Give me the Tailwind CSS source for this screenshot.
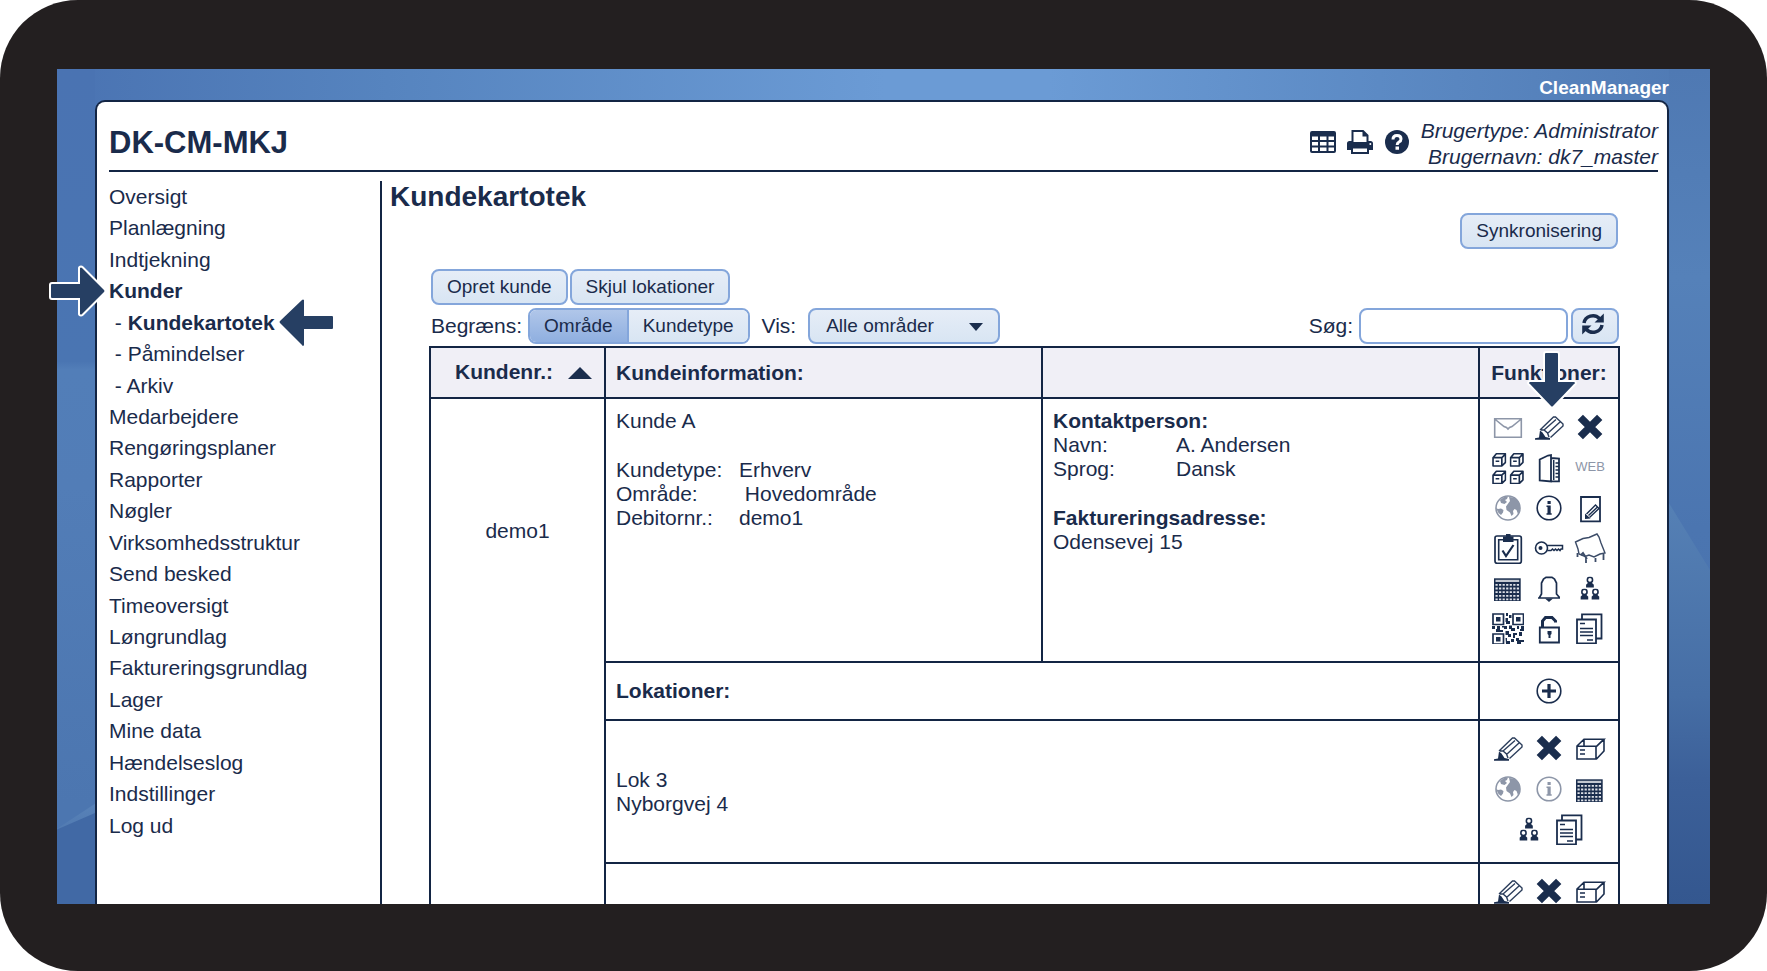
<!DOCTYPE html>
<html lang="da">
<head>
<meta charset="utf-8">
<title>Kundekartotek</title>
<script src="https://cdn.jsdelivr.net/npm/@tailwindcss/browser@4"></script>
</head>
<body class="bg-white">
<svg class="hidden" aria-hidden="true">
  <defs>
    <symbol id="mail" viewBox="0 0 32 32"><path d="M2.7 6.7H29.3V25.3H2.7ZM2.7 7L12 14.5L14.5 15.5L16 17L17.5 15.5L20 14.500L29.300 7" fill="none" stroke="#8d96a8" stroke-width="1.6"/></symbol>
    <symbol id="pencil" viewBox="0 0 32 32"><path d="M7 18L20.500 5H22.500L30 12V14L17.500 25.500M8 18H11L14.500 21L16 25M11 18L23 7.500M14.500 21.500L27 10" fill="none" stroke="#2c3e5c" stroke-width="1.400"/><path d="M2 27.700V26.200L6 25.500L7 18.500L9.500 20.500L12.500 25L17 26V27.700Z" fill="#1a2d4d"/></symbol>
    <symbol id="cross" viewBox="0 0 32 32"><path d="M6.300 5.300L25.700 24.700M25.700 5.300L6.300 24.700" stroke="#1a2d4d" stroke-width="7.500"/></symbol>
    <symbol id="cube" viewBox="0 0 14 14"><path d="M1 5H9.500V13H1ZM1 5L4.200 1.200H13V9.500L9.500 13M9.500 5L13 1.500" fill="none" stroke="#1a2d4d" stroke-width="1.600" stroke-linejoin="round"/><path d="M3.500 8.500H7" stroke="#1a2d4d" stroke-width="1.500"/></symbol>
    <symbol id="cubes" viewBox="0 0 32 32"><use href="#cube" x="0" y="0.500" width="14.500" height="14.500"/><use href="#cube" x="17.500" y="0.500" width="14.500" height="14.500"/><use href="#cube" x="0" y="18" width="14.500" height="14.500"/><use href="#cube" x="17.500" y="18" width="14.500" height="14.500"/></symbol>
    <symbol id="door" viewBox="0 0 32 32"><path d="M6.700 7.500L15 3.500L18 3V29.500L6.700 28.500ZM18 6L26 6.500V29.300H18" fill="none" stroke="#1a2d4d" stroke-width="1.800"/><path d="M22.500 11H26M22.500 14.500H26M22.500 18H26M22.500 21.500H26M22.500 25H26M20.700 8V28" stroke="#1a2d4d" stroke-width="1.500"/></symbol>
    <symbol id="globe" viewBox="0 0 32 32"><circle cx="16" cy="16" r="12" fill="#fff" stroke="#8d96a8" stroke-width="1.600"/><path d="M4 16L6 17L9 16.500L11.500 18L11 20.500L9 23L6.500 21ZM8 8L12 5L16 4.500L15 7L13 8L15 10L12.500 12L9 11ZM17 5L22 5.500L26 9L28 14V19L26 22L24.500 18L22.500 17L21 19L21.500 22L19.500 24L18 20.500L14.500 18L14 14.500L16.500 11L18 9Z" fill="#8d96a8"/></symbol>
    <symbol id="info" viewBox="0 0 32 32"><circle cx="16" cy="16" r="11.800" fill="none" stroke="currentColor" stroke-width="1.600"/><path d="M14.500 9H17.700V12H14.500ZM13.500 13.500H17.700V21.200H18.700V22.700H13.500V21.200H14.500V15H13.500Z" fill="currentColor"/></symbol>
    <symbol id="editpage" viewBox="0 0 32 32"><path d="M7 5H26V29.300H7Z" fill="none" stroke="#1a2d4d" stroke-width="1.800"/><path d="M12.500 22L21.500 13L25 16.500L15.500 25.500M14.500 23.500L23.500 15" fill="none" stroke="#1a2d4d" stroke-width="1.400"/><path d="M11 27V21.500L16.500 26.500Z" fill="#1a2d4d"/></symbol>
    <symbol id="clipboard" viewBox="0 0 32 32"><rect x="3" y="4" width="26.300" height="27.300" rx="2" fill="none" stroke="#1a2d4d" stroke-width="1.700"/><path d="M6.700 7.700H25.700V27.700H6.700Z" fill="none" stroke="#1a2d4d" stroke-width="1.600"/><path d="M11 10V4.500H14V2H18.500V4.500H21.500V10Z" fill="#1a2d4d"/><path d="M10.500 18.500L14 24L21.500 13" fill="none" stroke="#1a2d4d" stroke-width="2.200"/></symbol>
    <symbol id="key" viewBox="0 0 32 32"><circle cx="8.500" cy="16" r="6" fill="none" stroke="#1a2d4d" stroke-width="1.600"/><circle cx="7.500" cy="16" r="2" fill="#1a2d4d"/><path d="M14 13.500H29.500V17H28L27 18.500L25.500 17L24 18.500L22.500 17L21 18.500L19.500 17L18 18.500H14.500" fill="none" stroke="#1a2d4d" stroke-width="1.500"/></symbol>
    <symbol id="board" viewBox="0 0 32 32"><path d="M1.500 10L9 6.500L15 5.500L23 2L25 5L27 11L31 21L26 22L20 25L15 23L11 24.500L5 22L4 17Z" fill="none" stroke="#3c4c68" stroke-width="1.400"/><path d="M3.500 21V25M12 26V31M21.500 26V30M29.500 22V28M7 23L9 21L11 24L13 27" fill="none" stroke="#3c4c68" stroke-width="1.800"/></symbol>
    <symbol id="calendar" viewBox="0 0 32 32"><path d="M2 6.300H28.700V29H2Z" fill="#1a2d4d"/><path d="M3.500 7.800H27.200V10H3.500Z" fill="#c3c8d1"/><path d="M3.500 12.800H27.500M3.500 16.500H27.500M3.500 20.200H27.500M3.500 23.900H27.500M3.500 27.300H27.500" stroke="#dfe2e8" stroke-width="1.800" stroke-dasharray="2.200 1.350"/></symbol>
    <symbol id="bell" viewBox="0 0 32 32"><path d="M5 26H27M6.500 25.500L8.500 22V11L10.500 7L13 5.300H19L21.500 7L23.500 11V22L26.500 25.500" fill="none" stroke="#1a2d4d" stroke-width="1.700"/><path d="M12 26.500H20L16 30Z" fill="#1a2d4d"/></symbol>
    <symbol id="person" viewBox="0 0 8 11"><circle cx="4" cy="3.300" r="2.500" fill="none" stroke="#1a2d4d" stroke-width="1.500"/><path d="M.3 10.500V8L2.200 6H5.800L7.700 8V10.500Z" fill="#1a2d4d"/></symbol>
    <symbol id="people" viewBox="0 0 32 32"><use href="#person" x="11.700" y="4.500" width="8.500" height="11.500"/><use href="#person" x="6.200" y="16.500" width="8.500" height="11.500"/><use href="#person" x="17.200" y="16.500" width="8.500" height="11.500"/></symbol>
    <symbol id="qr" viewBox="0 0 32 32"><path d="M1 2H11.500V12.500H1ZM21 2H31.500V12.500H21ZM1 22H11.500V32H1Z" fill="none" stroke="#1a2d4d" stroke-width="1.700"/><path d="M4 5H8.500V9.500H4ZM24 5H28.500V9.500H24ZM4 25H8.500V29.500H4ZM14 1H16V4H14ZM17 3H19.500V6H17ZM13.500 6H16V9H18V12H14V10H13.500ZM0 14H3V17H0ZM5 14H8V18H11V20H4V17H5ZM10 14H15V17H12V15.500H10ZM17 13.500H20V16H23V19H19V17H17ZM25 14H27V17H25ZM29 14H32V19H28V17H29ZM13.500 19H17V22H19V25H16V23H13.500ZM21 21H25V23H23V26H21ZM27 20H30V24H27ZM13.500 26H15V29H18V32H14ZM19 27H22V30H19ZM24 26H27V28H32V30H29V32H25V29H24Z" fill="#1a2d4d"/></symbol>
    <symbol id="lock" viewBox="0 0 32 32"><path d="M6.800 15.500H26V30.500H6.800Z" fill="none" stroke="#1a2d4d" stroke-width="1.800"/><path d="M9.500 15V9L12.500 5.500H19L22.500 9V10.500" fill="none" stroke="#1a2d4d" stroke-width="3"/><path d="M14.500 19H18.500V22L17.500 23V26H15.500V23L14.500 22Z" fill="#1a2d4d"/></symbol>
    <symbol id="docs" viewBox="0 0 32 32"><path d="M8 6.500V2.300H27.500V26.500H22M3 7.500H22V31.500H3Z" fill="none" stroke="#1a2d4d" stroke-width="1.800"/><path d="M6 11.500H11M6 16.500H19M6 20H19M6 23.500H19M13 28H19" stroke="#1a2d4d" stroke-width="1.600"/></symbol>
    <symbol id="plus" viewBox="0 0 32 32"><circle cx="16" cy="16" r="11.800" fill="none" stroke="#1a2d4d" stroke-width="1.600"/><path d="M16 9V23M9 16H23" stroke="#1a2d4d" stroke-width="3.200"/></symbol>
    <symbol id="box" viewBox="0 0 32 32"><path d="M3 13.300H22V26H3ZM3 13L10 6.200H30L22.500 13.300M30 6.200V18L22.500 26M10 6.200V12.500" fill="none" stroke="#1a2d4d" stroke-width="1.600"/><path d="M6 17H11M6 21H11" stroke="#1a2d4d" stroke-width="1.600"/></symbol>
  </defs>
</svg>

<div class="relative flex h-screen flex-col overflow-hidden rounded-[78px] bg-[#231f20] px-[57px] pt-[69px] pb-[67px] font-['Liberation_Sans',Arial,sans-serif] text-[21px] text-[#1a2b4b]">
  <div class="relative flex min-h-0 flex-1 flex-col overflow-hidden bg-[linear-gradient(to_right,#4a73b2,#5684bf_20%,#6b9bd5_50%,#6b9bd5_60%,#5c8ac4_80%,#4f79b3)] pr-[41px] pl-[38px]">
    <!-- Side bands of the wallpaper with their diagonal ridges -->
    <div class="absolute inset-y-0 left-0 w-[38px] bg-[linear-gradient(to_bottom,#4a73b2,#4a75b2_35%,#527eb8_36%,#527db7_50%,#4c76b0_88%)]">
      <div class="h-full bg-linear-to-b from-[#5882b8] from-88% to-[#3d659f] [clip-path:polygon(0_91%,100%_88%,100%_100%,0_100%)]"></div>
    </div>
    <div class="absolute inset-y-0 right-0 w-[41px] bg-[linear-gradient(to_bottom,#4f79b3,#5581b9_25%,#4b75b0_55%,#476fab)]">
      <div class="h-full bg-[linear-gradient(to_bottom,#5580b5_52%,#466ea5_75%,#3c6099_85%,#34578f)] [clip-path:polygon(0_52%,100%_60%,100%_100%,0_100%)]"></div>
    </div>
    <div class="absolute bottom-0 left-0 h-[91px] w-[38px] bg-[#4169a5] [clip-path:polygon(0_18%,100%_0,100%_100%,0_100%)]"></div>
    <div class="relative h-[31px] flex-none text-right text-[19px] leading-[38px] font-bold text-white">CleanManager</div>

    <div class="relative flex min-h-0 flex-1 flex-col overflow-hidden rounded-t-[10px] border-x-2 border-t-2 border-[#132544] bg-white pr-[9px] pl-3">
      <header class="flex h-[70px] flex-none items-end border-b-2 border-[#132544]">
        <h1 class="flex-1 pb-[9px] text-[31px] leading-9 font-bold">DK-CM-MKJ</h1>
        <div class="mr-[11px] flex items-center gap-[11px] pb-[15px]">
          <button type="button" aria-label="Tabel"><svg class="block size-[26px]" viewBox="0 0 26 26"><path fill-rule="evenodd" d="M2 2H24Q26 2 26 4V22Q26 24 24 24H2Q0 24 0 22V4Q0 2 2 2ZM2 7.500V11H8V7.500ZM10 7.500V11H16.500V7.500ZM18.500 7.500V11H24V7.500ZM2 13V16.500H8V13ZM10 13V16.500H16.500V13ZM18.500 13V16.500H24V13ZM2 18.500V22H8V18.500ZM10 18.500V22H16.500V18.500ZM18.500 18.500V22H24V18.500Z" fill="#1a2d4d"/></svg></button>
          <button type="button" aria-label="Udskriv"><svg class="block size-[26px]" viewBox="0 0 26 26"><path d="M5.500 14V2H16L20.500 6.500V14" fill="#fff" stroke="#1a2d4d" stroke-width="2"/><path d="M15.500 1.500V7.500H21" fill="#1a2d4d"/><path d="M0 21V14.500Q0 12 2.500 12H5V13H21V12H23.500Q26 12 26 14.500V21H22V18.500H4V21Z" fill="#1a2d4d"/><path d="M5 18.500H21V24H5Z" fill="#fff" stroke="#1a2d4d" stroke-width="2"/><circle cx="23.300" cy="15" r="1" fill="#fff"/></svg></button>
          <button type="button" aria-label="Hjælp"><svg class="block size-[26px]" viewBox="0 0 26 26"><circle cx="13" cy="13" r="12" fill="#1a2d4d"/><path d="M9 10.500Q9 6.500 13 6.500Q17 6.500 17 10Q17 12 15 13Q13.200 14 13.200 16" fill="none" stroke="#fff" stroke-width="3"/><path d="M11.500 17.500H15V20.800H11.500Z" fill="#fff"/></svg></button>
        </div>
        <div class="text-right leading-[26px] italic">
          <div>Brugertype: Administrator</div>
          <div>Brugernavn: dk7_master</div>
        </div>
      </header>

      <div class="flex min-h-0 flex-1 pt-[9px]">
        <nav class="w-[273px] flex-none border-r-2 border-[#132544]" aria-label="Hovedmenu">
          <ul class="grid h-[660px] auto-rows-fr items-center whitespace-pre">
            <li><a href="#">Oversigt</a></li>
            <li><a href="#">Planlægning</a></li>
            <li><a href="#">Indtjekning</a></li>
            <li><a href="#" class="font-bold">Kunder</a></li>
            <li> - <a href="#" class="font-bold">Kundekartotek</a></li>
            <li> - <a href="#">Påmindelser</a></li>
            <li> - <a href="#">Arkiv</a></li>
            <li><a href="#">Medarbejdere</a></li>
            <li><a href="#">Rengøringsplaner</a></li>
            <li><a href="#">Rapporter</a></li>
            <li><a href="#">Nøgler</a></li>
            <li><a href="#">Virksomhedsstruktur</a></li>
            <li><a href="#">Send besked</a></li>
            <li><a href="#">Timeoversigt</a></li>
            <li><a href="#">Løngrundlag</a></li>
            <li><a href="#">Faktureringsgrundlag</a></li>
            <li><a href="#">Lager</a></li>
            <li><a href="#">Mine data</a></li>
            <li><a href="#">Hændelseslog</a></li>
            <li><a href="#">Indstillinger</a></li>
            <li><a href="#">Log ud</a></li>
          </ul>
        </nav>

        <main class="min-w-0 flex-1">
          <h2 class="pl-2 text-[28px] leading-8 font-bold">Kundekartotek</h2>
          <div class="mr-[38px] ml-[47px]">
            <div class="mr-[2px] flex justify-end">
              <button type="button" class="h-9 rounded-lg border-2 border-[#84a6db] bg-linear-to-b from-[#e6edf7] to-[#d8e5f3] px-[14px] text-[19px]">Synkronisering</button>
            </div>
            <div class="mt-5 ml-[2px] flex gap-[2px]">
              <button type="button" class="h-9 rounded-lg border-2 border-[#84a6db] bg-linear-to-b from-[#e6edf7] to-[#d8e5f3] px-[14px] text-[19px]">Opret kunde</button>
              <button type="button" class="h-9 rounded-lg border-2 border-[#84a6db] bg-linear-to-b from-[#e6edf7] to-[#d8e5f3] px-[14px] text-[19px]">Skjul lokationer</button>
            </div>
            <div class="mt-[3px] mr-[1px] mb-[2px] ml-[2px] flex items-center">
              <span>Begræns:</span>
              <div class="ml-[6px] flex h-9 overflow-hidden rounded-lg border-2 border-[#84a6db] text-[19px]">
                <button type="button" aria-pressed="true" class="border-r-2 border-[#84a6db] bg-linear-to-b from-[#b0c6e9] to-[#8fafe0] px-[14px]">Område</button>
                <button type="button" aria-pressed="false" class="bg-linear-to-b from-[#e6edf7] to-[#d8e5f3] px-[14px]">Kundetype</button>
              </div>
              <label for="vis" class="ml-3">Vis:</label>
              <div class="relative ml-3">
                <select id="vis" class="h-9 w-48 appearance-none rounded-lg border-2 border-[#84a6db] bg-linear-to-b from-[#e6edf7] to-[#d8e5f3] pl-4 text-[19px]"><option>Alle områder</option></select>
                <svg class="pointer-events-none absolute top-[15px] right-[17px] h-2 w-[14px]" viewBox="0 0 14 8"><path d="M0 0H14L7 8Z" fill="#1a2d4d"/></svg>
              </div>
              <label for="soeg" class="ml-auto">Søg:</label>
              <input id="soeg" type="text" class="ml-[6px] h-9 w-[209px] rounded-lg border-2 border-[#84a6db] bg-white px-2">
              <button type="button" aria-label="Opdater" class="ml-[3px] flex h-9 w-12 items-center justify-center rounded-lg border-2 border-[#84a6db] bg-linear-to-b from-[#e6edf7] to-[#d8e5f3]"><svg class="mr-1 mb-1 size-6" viewBox="0 0 24 24"><path d="M3 11A9 8.500 0 0 1 18.500 6.500M21 13A9 8.500 0 0 1 5.500 17.500" fill="none" stroke="#1a2d4d" stroke-width="3.500"/><path d="M22.800 1.500V10.500H13.500ZM1.200 22.500V13.500H10.500Z" fill="#1a2d4d"/></svg></button>
            </div>

            <table class="w-full table-fixed border-collapse leading-6">
              <colgroup><col class="w-[175px]"><col><col><col class="w-[140px]"></colgroup>
              <thead>
                <tr class="h-[51px] bg-[#f0eff6] text-left">
                  <th class="border-2 border-[#132544] pb-[2px] pl-6"><button type="button" class="flex items-center gap-[15px] font-bold">Kundenr.: <svg class="mt-[2px] h-3 w-6" viewBox="0 0 24 12"><path d="M12 0L24 12H0Z" fill="#1a2d4d"/></svg></button></th>
                  <th class="border-2 border-[#132544] pl-[10px]">Kundeinformation:</th>
                  <th class="border-2 border-[#132544]"></th>
                  <th class="border-2 border-[#132544] text-center">Funktioner:</th>
                </tr>
              </thead>
              <tbody>
                <tr class="h-[264px]">
                  <td class="border-x-2 border-t-2 border-[#132544] text-center">demo1</td>
                  <td class="border-2 border-[#132544] pt-[10px] pl-[10px] align-top">
                    <div class="mb-[25px]">Kunde A</div>
                    <dl class="grid grid-cols-[123px_1fr]">
                      <dt>Kundetype:</dt><dd>Erhverv</dd>
                      <dt>Område:</dt><dd>&nbsp;Hovedområde</dd>
                      <dt>Debitornr.:</dt><dd>demo1</dd>
                    </dl>
                  </td>
                  <td class="border-2 border-[#132544] pt-[10px] pl-[10px] align-top">
                    <div class="font-bold">Kontaktperson:</div>
                    <dl class="mb-[25px] grid grid-cols-[123px_1fr]">
                      <dt>Navn:</dt><dd>A. Andersen</dd>
                      <dt>Sprog:</dt><dd>Dansk</dd>
                    </dl>
                    <div class="font-bold">Faktureringsadresse:</div>
                    <div>Odensevej 15</div>
                  </td>
                  <td class="border-2 border-[#132544] pt-[9px] align-top">
                    <div class="mx-auto grid w-[123px] auto-rows-[40px] grid-cols-3 place-items-center">
                      <button type="button" aria-label="Mail"><svg class="block size-8"><use href="#mail"/></svg></button>
                      <button type="button" aria-label="Rediger"><svg class="block size-8"><use href="#pencil"/></svg></button>
                      <button type="button" aria-label="Slet"><svg class="block size-8"><use href="#cross"/></svg></button>
                      <button type="button" aria-label="Lokationer"><svg class="block size-8"><use href="#cubes"/></svg></button>
                      <button type="button" aria-label="Mappe"><svg class="block size-8"><use href="#door"/></svg></button>
                      <button type="button" class="pb-[2px] text-[13px] text-[#8d96a8]">WEB</button>
                      <button type="button" aria-label="Kort"><svg class="block size-8"><use href="#globe"/></svg></button>
                      <button type="button" aria-label="Information"><svg class="block size-8"><use href="#info"/></svg></button>
                      <button type="button" aria-label="Noter"><svg class="block size-8"><use href="#editpage"/></svg></button>
                      <button type="button" aria-label="Opgaver"><svg class="block size-8"><use href="#clipboard"/></svg></button>
                      <button type="button" aria-label="Nøgler"><svg class="block size-8"><use href="#key"/></svg></button>
                      <button type="button" aria-label="Tavle"><svg class="block size-8"><use href="#board"/></svg></button>
                      <button type="button" aria-label="Kalender"><svg class="block size-8"><use href="#calendar"/></svg></button>
                      <button type="button" aria-label="Påmindelser"><svg class="block size-8"><use href="#bell"/></svg></button>
                      <button type="button" aria-label="Medarbejdere"><svg class="block size-8"><use href="#people"/></svg></button>
                      <button type="button" aria-label="QR-kode"><svg class="block size-8"><use href="#qr"/></svg></button>
                      <button type="button" aria-label="Adgang"><svg class="block size-8"><use href="#lock"/></svg></button>
                      <button type="button" aria-label="Dokumenter"><svg class="block size-8"><use href="#docs"/></svg></button>
                    </div>
                  </td>
                </tr>
                <tr class="h-[58px]">
                  <td rowspan="3" class="border-x-2 border-[#132544]"></td>
                  <td colspan="2" class="border-2 border-[#132544] pl-[10px] font-bold">Lokationer:</td>
                  <td class="border-2 border-[#132544]"><button type="button" aria-label="Tilføj lokation" class="mx-auto block"><svg class="block size-8"><use href="#plus"/></svg></button></td>
                </tr>
                <tr class="h-[143px]">
                  <td colspan="2" class="border-2 border-[#132544] pl-[10px]">Lok 3<br>Nyborgvej 4</td>
                  <td class="border-2 border-[#132544] pt-2 align-top">
                    <div class="mx-auto flex w-[123px] flex-wrap justify-center">
                      <button type="button" aria-label="Rediger" class="flex h-10 w-[41px] items-center justify-center"><svg class="size-8"><use href="#pencil"/></svg></button>
                      <button type="button" aria-label="Slet" class="flex h-10 w-[41px] items-center justify-center"><svg class="size-8"><use href="#cross"/></svg></button>
                      <button type="button" aria-label="Boks" class="flex h-10 w-[41px] items-center justify-center"><svg class="size-8"><use href="#box"/></svg></button>
                      <button type="button" aria-label="Kort" class="flex h-10 w-[41px] items-center justify-center"><svg class="size-8"><use href="#globe"/></svg></button>
                      <button type="button" aria-label="Information" class="flex h-10 w-[41px] items-center justify-center text-[#8d96a8]"><svg class="size-8"><use href="#info"/></svg></button>
                      <button type="button" aria-label="Kalender" class="flex h-10 w-[41px] items-center justify-center"><svg class="size-8"><use href="#calendar"/></svg></button>
                      <button type="button" aria-label="Medarbejdere" class="flex h-10 w-[41px] items-center justify-center"><svg class="size-8"><use href="#people"/></svg></button>
                      <button type="button" aria-label="Dokumenter" class="flex h-10 w-[41px] items-center justify-center"><svg class="size-8"><use href="#docs"/></svg></button>
                    </div>
                  </td>
                </tr>
                <tr class="h-[143px]">
                  <td colspan="2" class="border-2 border-[#132544]"></td>
                  <td class="border-2 border-[#132544] pt-2 align-top">
                    <div class="mx-auto flex w-[123px] flex-wrap justify-center">
                      <button type="button" aria-label="Rediger" class="flex h-10 w-[41px] items-center justify-center"><svg class="size-8"><use href="#pencil"/></svg></button>
                      <button type="button" aria-label="Slet" class="flex h-10 w-[41px] items-center justify-center"><svg class="size-8"><use href="#cross"/></svg></button>
                      <button type="button" aria-label="Boks" class="flex h-10 w-[41px] items-center justify-center"><svg class="size-8"><use href="#box"/></svg></button>
                    </div>
                  </td>
                </tr>
              </tbody>
            </table>
          </div>
        </main>
      </div>
    </div>
  </div>

  <!-- Pointer arrows laid over the screen -->
  <svg class="absolute top-[264px] left-[48px] h-[54px] w-[60px]" viewBox="0 0 60 54"><path d="M4 20H32V4Q33 3 34 4L56 26Q57 27 56 28L34 50Q33 51 32 50V34H4Q3 34 3 33V21Q3 20 4 20Z" fill="#263f63" stroke="#fff" stroke-width="4" stroke-linejoin="round" paint-order="stroke"/></svg>
  <svg class="absolute top-[296px] left-[276px] h-[54px] w-[60px]" viewBox="0 0 60 54"><path d="M56 20H28V4Q27 3 26 4L4 25Q3 26 4 27L26 49Q27 51 28 49V33H56Q57 33 57 32V21Q57 20 56 20Z" fill="#263f63" stroke="#fff" stroke-width="4" stroke-linejoin="round" paint-order="stroke"/></svg>
  <svg class="absolute top-[350px] right-[188px] h-[60px] w-[54px]" viewBox="0 0 54 60"><path d="M20 4V32H5Q3 33 5 34L26 56Q27 57 28 56L49 34Q51 33 49 32H33V4Q33 3 32 3H21Q20 3 20 4Z" fill="#263f63" stroke="#fff" stroke-width="4" stroke-linejoin="round" paint-order="stroke"/></svg>
</div>
</body>
</html>
